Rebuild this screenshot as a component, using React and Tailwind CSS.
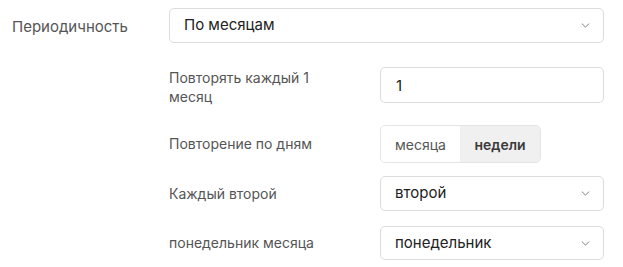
import { useState } from 'react'

const font = { fontFamily: 'Inter, "Noto Sans", sans-serif' }

function Chevron() {
  return (
    <svg viewBox="0 0 10 6" className="h-[5px] w-[9px] text-[#777]" fill="none">
      <path d="M1 1l4 4 4-4" stroke="currentColor" strokeWidth="1.1" strokeLinecap="round" strokeLinejoin="round" />
    </svg>
  )
}

function Select({ value, className = '' }) {
  return (
    <button
      type="button"
      className={`flex w-full items-center justify-between rounded-[5px] border border-[#dcdcdc] bg-white pl-[14px] pr-[13px] text-left text-[15px] text-[#222] ${className}`}
    >
      <span>{value}</span>
      <Chevron />
    </button>
  )
}

export default function App() {
  const [mode, setMode] = useState('week')

  return (
    <div className="min-h-[267px] bg-white pl-[12px] pr-[19px] pt-[8px]" style={font}>
      <div className="flex">
        <div className="w-[157px] pt-[9px] text-[15px] leading-[20px] text-[#555]">Периодичность</div>
        <div className="flex-1">
          <Select value="По месяцам" className="h-[35px]" />

          <div className="mt-[24px] flex h-[36px]">
            <div className="w-[211px] shrink-0 pt-[1px]">
              <p className="w-[160px] text-[14px] leading-[19px] text-[#555]">Повторять каждый 1 месяц</p>
            </div>
            <input
              defaultValue="1"
              className="h-[36px] w-full rounded-[5px] border border-[#dcdcdc] bg-white px-[15px] text-[15px] text-[#222] outline-none"
            />
          </div>

          <div className="mt-[22px] flex items-center">
            <div className="w-[211px] shrink-0 text-[14px] leading-[20px] text-[#555]">Повторение по дням</div>
            <div className="flex h-[38px] overflow-hidden rounded-[5px] border border-[#e4e4e4]">
              <button
                type="button"
                onClick={() => setMode('month')}
                className={`w-[79px] text-[14px] ${mode === 'month' ? 'bg-[#f0f0f0] font-semibold text-[#3a3a3a]' : 'bg-white text-[#555]'}`}
              >
                месяца
              </button>
              <button
                type="button"
                onClick={() => setMode('week')}
                className={`w-[80px] text-[14px] ${mode === 'week' ? 'bg-[#f0f0f0] font-semibold text-[#3a3a3a]' : 'bg-white text-[#555]'}`}
              >
                недели
              </button>
            </div>
          </div>

          <div className="mt-[13px] flex items-center">
            <div className="w-[211px] shrink-0 text-[14px] leading-[20px] text-[#555]">Каждый второй</div>
            <Select value="второй" className="h-[35px]" />
          </div>

          <div className="mt-[15px] flex items-center">
            <div className="w-[211px] shrink-0 text-[14px] leading-[20px] text-[#555]">понедельник месяца</div>
            <Select value="понедельник" className="h-[34px]" />
          </div>
        </div>
      </div>
    </div>
  )
}
